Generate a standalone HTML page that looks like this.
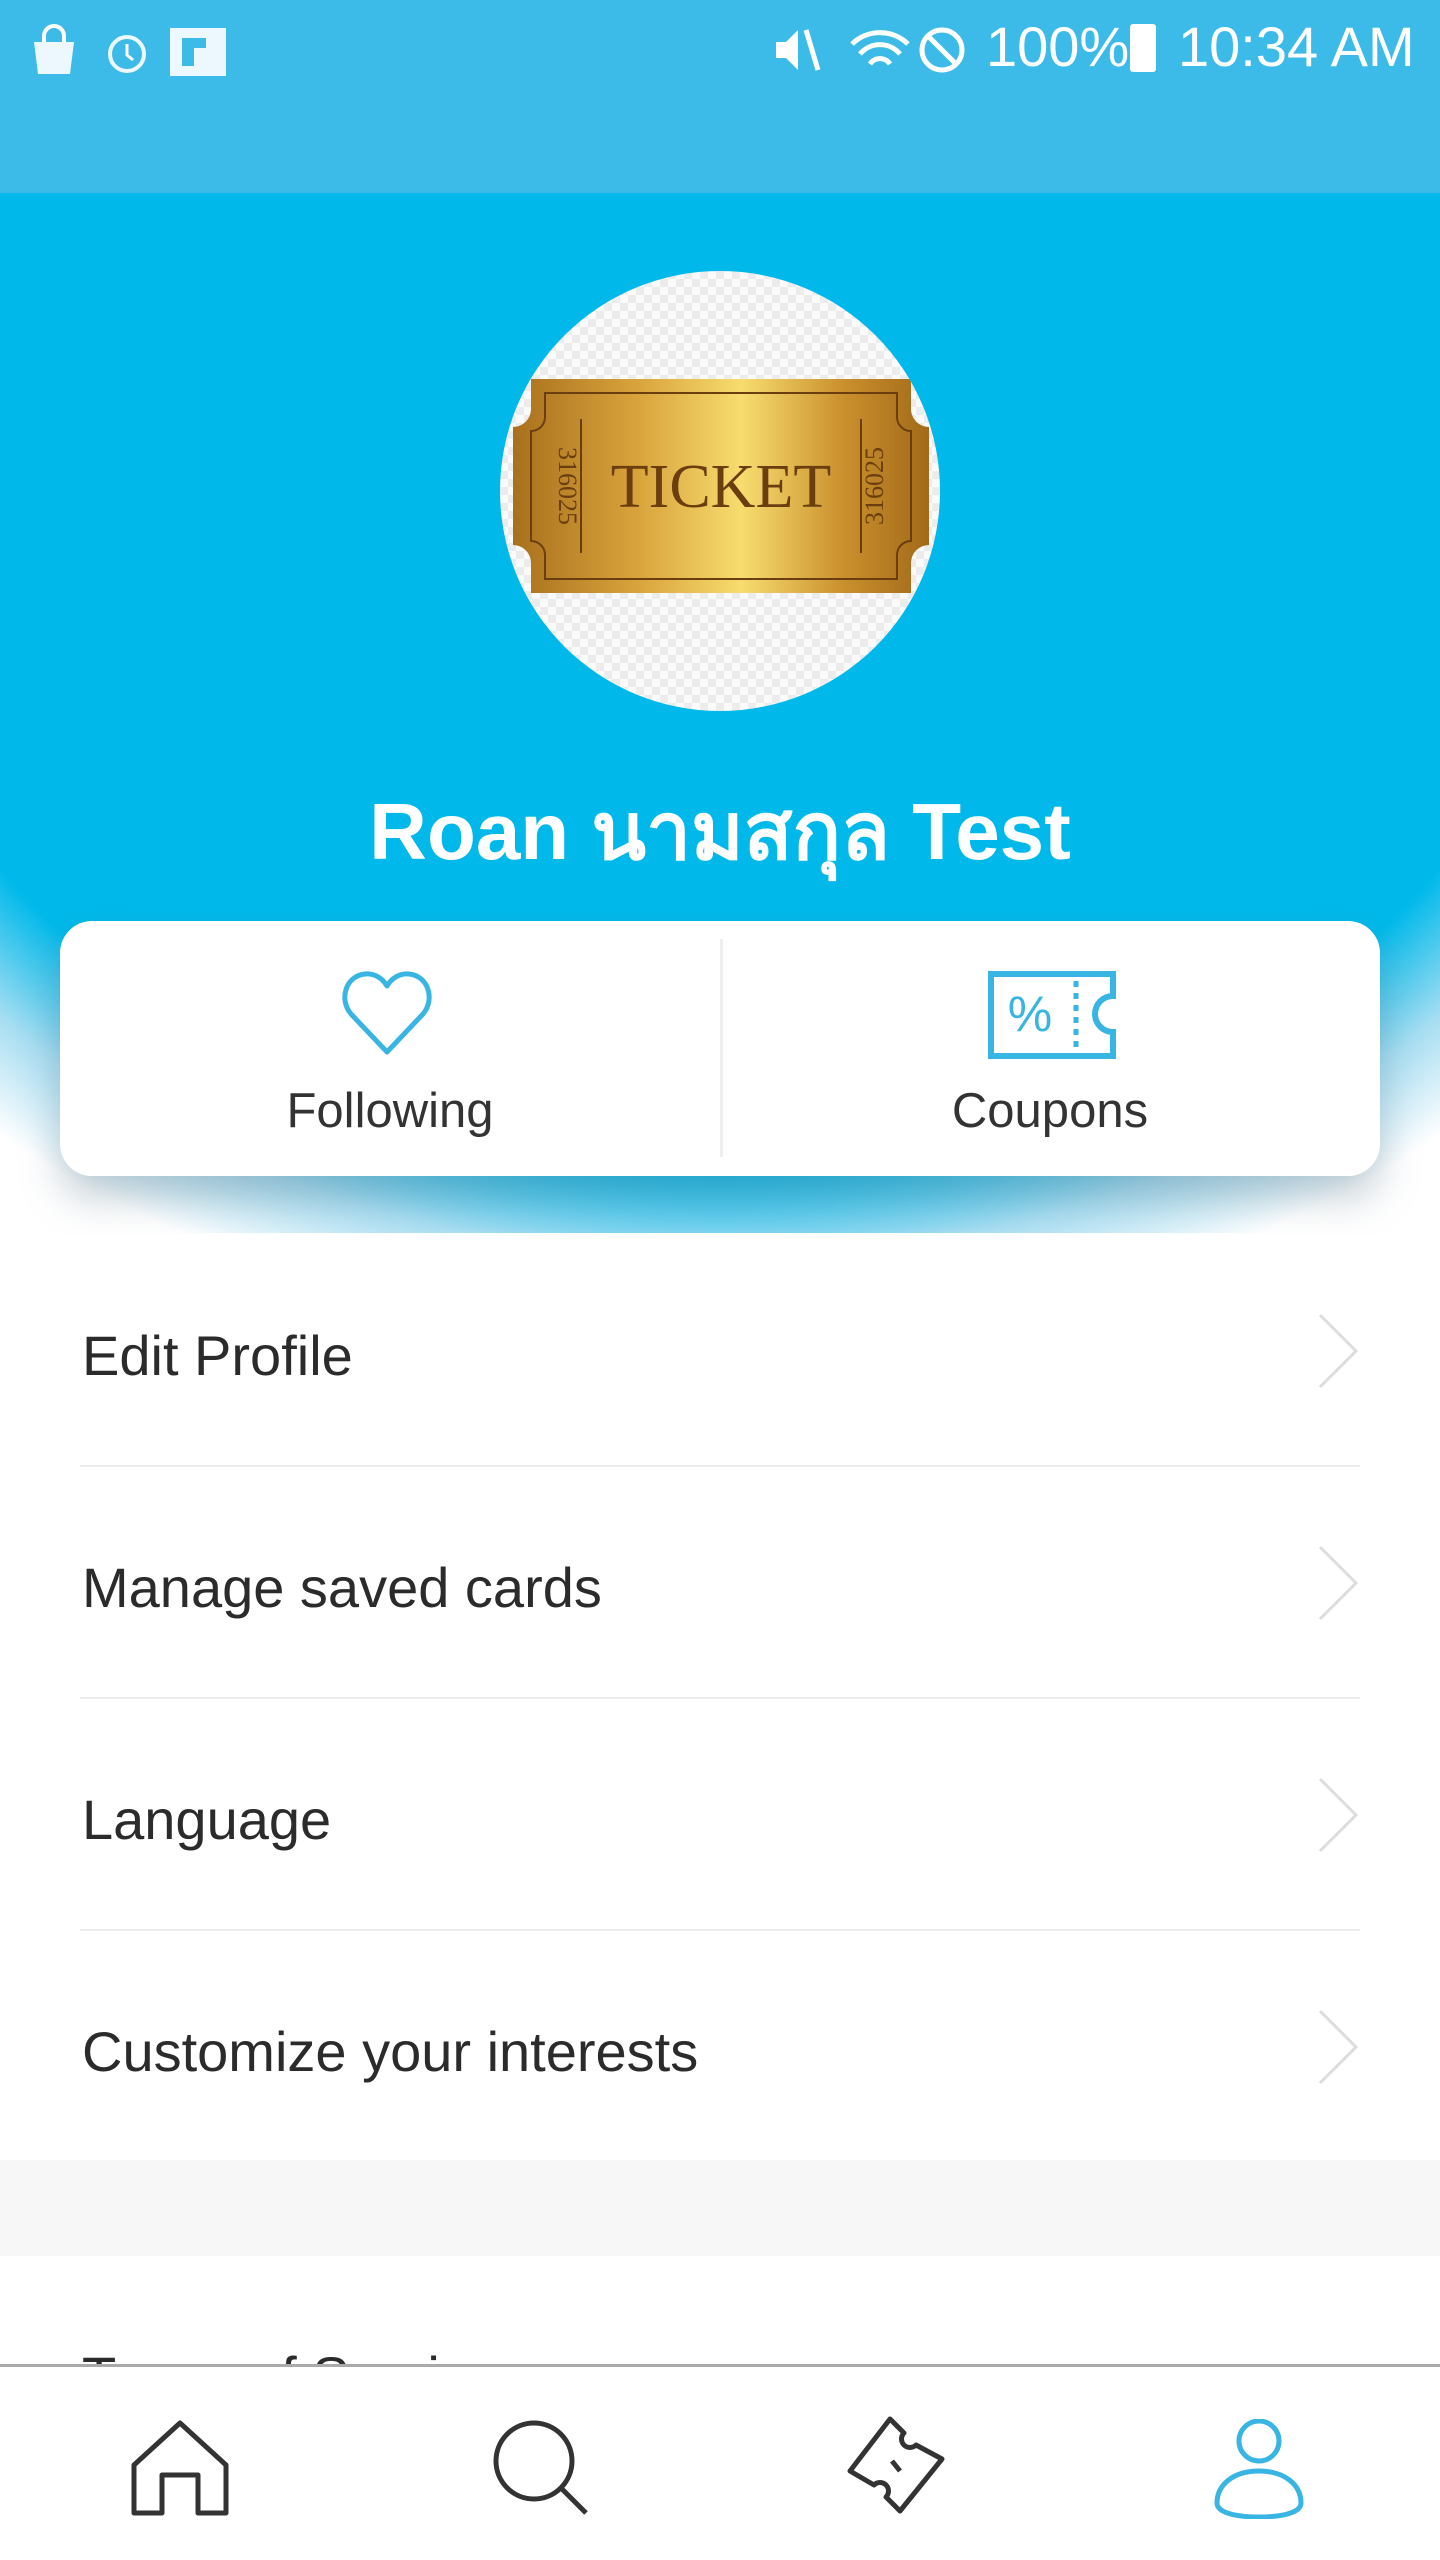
<!DOCTYPE html>
<html><head><meta charset="utf-8"><style>
*{margin:0;padding:0;box-sizing:border-box}
body{width:1440px;height:2560px;overflow:hidden;background:#fff;font-family:"Liberation Sans","Noto Sans CJK SC",sans-serif;position:relative}
.status{position:absolute;left:0;top:0;width:1440px;height:193px;background:#3dbbe8}
.hero{position:absolute;left:0;top:193px;width:1440px;height:1040px;background:radial-gradient(ellipse 1100px 850px at 720px 300px,#00b9ea 79%,#a8def2 90%,#ffffff 100%)}
.avatar{position:absolute;left:500px;top:271px;width:440px;height:440px;border-radius:50%;background:#f4f4f4;background-image:repeating-conic-gradient(#ececec 0 25%,#fafafa 0 50%);background-size:16px 16px;overflow:hidden}
.name{position:absolute;left:0;width:1440px;top:768px;text-align:center;color:#fff;font-weight:bold;font-size:80px;font-family:"Liberation Sans","Noto Sans CJK SC","WenQuanYi Zen Hei",sans-serif}
.card{position:absolute;left:60px;top:921px;width:1320px;height:255px;background:#fff;border-radius:32px;box-shadow:0 22px 40px rgba(90,120,140,.35)}
.div{position:absolute;left:660px;top:18px;width:3px;height:218px;background:#eee}
.lbl{position:absolute;top:162px;font-size:49px;color:#333;text-align:center;width:660px}
.row{position:absolute;left:0;width:1440px;height:232px}
.row span{position:absolute;left:82px;top:88px;font-size:56px;color:#2b2b2b}
.row svg{position:absolute;left:1316px;top:76px}
.row .ln{position:absolute;left:80px;right:80px;bottom:0;height:2px;background:#ececec}
.nav{position:absolute;left:0;top:2364px;width:1440px;height:196px;background:#fff;border-top:3px solid #aaa}
.st{position:absolute;top:14px;color:#fff;font-size:56px}
</style></head><body>
<div class="status">
 <svg style="position:absolute;left:30px;top:24px" width="200" height="54" viewBox="0 0 200 54">
  <path d="M4 18h40l-4 32H8z" fill="#fff" opacity=".9"/><path d="M14 18v-6a10 10 0 0 1 20 0v6" stroke="#fff" stroke-width="4" fill="none"/>
  <circle cx="97" cy="30" r="17" stroke="#fff" stroke-width="4" fill="none" opacity=".9"/><path d="M97 20v11l6 5" stroke="#fff" stroke-width="3" fill="none"/>
  <rect x="140" y="4" width="56" height="48" fill="#fff" opacity=".9"/><path d="M152 14h24v10h-12v18h-12z" fill="#3dbbe8"/>
 </svg>
 <svg style="position:absolute;left:772px;top:22px" width="220" height="56" viewBox="0 0 220 56">
  <path d="M4 20h10l12-12v40L14 36H4z" fill="#fff"/><path d="M34 8l12 40" stroke="#fff" stroke-width="5"/>
  <path d="M80 22a40 40 0 0 1 56 0M88 32a26 26 0 0 1 40 0M98 42a12 12 0 0 1 20 0" stroke="#fff" stroke-width="5" fill="none"/>
  <circle cx="170" cy="28" r="20" stroke="#fff" stroke-width="5" fill="none"/><path d="M156 14l28 28" stroke="#fff" stroke-width="5"/>
 </svg>
 <div class="st" style="left:986px">100%</div>
 <div style="position:absolute;left:1130px;top:24px;width:26px;height:48px;background:#fff;border-radius:3px"></div>
 <div class="st" style="left:1178px">10:34 AM</div>
</div>
<div class="hero"></div>
<div class="avatar">
 <svg style="position:absolute;left:11px;top:108px" width="420" height="214" viewBox="0 0 420 214">
  <defs><linearGradient id="g" x1="0" x2="1"><stop offset="0" stop-color="#a8701d"/><stop offset=".3" stop-color="#d9a33c"/><stop offset=".55" stop-color="#f7dc6e"/><stop offset=".8" stop-color="#c98e2c"/><stop offset="1" stop-color="#a26a1a"/></linearGradient></defs>
  <path d="M20 0h380v30a18 18 0 0 0 18 18v118a18 18 0 0 0-18 18v30H20v-30a18 18 0 0 0-18-18V48a18 18 0 0 0 18-18z" fill="url(#g)"/>
  <path d="M34 14h352v24a14 14 0 0 0 14 14v110a14 14 0 0 0-14 14v24H34v-24a14 14 0 0 0-14-14V52a14 14 0 0 0 14-14z" fill="none" stroke="#6b3e10" stroke-width="2"/>
  <path d="M70 40v134M350 40v134" stroke="#6b3e10" stroke-width="2"/>
  <text x="210" y="128" text-anchor="middle" font-family="Liberation Serif,serif" font-size="62" fill="#6b3e10">TICKET</text>
  <text transform="translate(48 107) rotate(90)" text-anchor="middle" font-family="Liberation Serif,serif" font-size="26" fill="#6b3e10">316025</text>
  <text transform="translate(372 107) rotate(-90)" text-anchor="middle" font-family="Liberation Serif,serif" font-size="26" fill="#6b3e10">316025</text>
 </svg>
</div>
<div class="name">Roan นามสกุล Test</div>
<div class="card">
 <svg style="position:absolute;left:281px;top:47px" width="92" height="92" viewBox="0 0 92 92"><path d="M46 84L10 46C-2 32 4 8 24 6c10-1 18 5 22 12 4-7 12-13 22-12 20 2 26 26 14 40z" fill="none" stroke="#38b5e3" stroke-width="5" stroke-linejoin="round"/></svg>
 <div class="lbl" style="left:0">Following</div>
 <div class="div"></div>
 <svg style="position:absolute;left:928px;top:50px" width="128" height="88" viewBox="0 0 128 88"><path d="M3 3h122v22a18 18 0 0 0 0 36v24H3z" fill="none" stroke="#38b5e3" stroke-width="6"/><path d="M88 10v68" stroke="#38b5e3" stroke-width="5" stroke-dasharray="6 6"/><text x="42" y="60" text-anchor="middle" font-size="50" fill="#38b5e3" font-family="Liberation Sans">%</text></svg>
 <div class="lbl" style="left:660px">Coupons</div>
</div>
<div class="row" style="top:1235px;background:#fff"><span>Edit Profile</span><svg width="44" height="80" viewBox="0 0 44 80"><path d="M4 4l36 36-36 36" fill="none" stroke="#ddd" stroke-width="3"/></svg><div class="ln"></div></div>
<div class="row" style="top:1467px"><span>Manage saved cards</span><svg width="44" height="80" viewBox="0 0 44 80"><path d="M4 4l36 36-36 36" fill="none" stroke="#ddd" stroke-width="3"/></svg><div class="ln"></div></div>
<div class="row" style="top:1699px"><span>Language</span><svg width="44" height="80" viewBox="0 0 44 80"><path d="M4 4l36 36-36 36" fill="none" stroke="#ddd" stroke-width="3"/></svg><div class="ln"></div></div>
<div class="row" style="top:1931px"><span>Customize your interests</span><svg width="44" height="80" viewBox="0 0 44 80"><path d="M4 4l36 36-36 36" fill="none" stroke="#ddd" stroke-width="3"/></svg></div>
<div style="position:absolute;left:0;top:2160px;width:1440px;height:96px;background:#f7f7f7"></div>
<div class="row" style="top:2256px;overflow:hidden;height:110px"><span style="top:88px">Terms of Service</span></div>
<div class="nav">
 <svg style="position:absolute;left:130px;top:52px" width="100" height="100" viewBox="0 0 100 100"><path d="M4 94V46L50 4l46 42v48H68V56H32v38z" fill="none" stroke="#333" stroke-width="5" stroke-linejoin="round"/></svg>
 <svg style="position:absolute;left:492px;top:52px" width="100" height="100" viewBox="0 0 100 100"><circle cx="42" cy="42" r="38" fill="none" stroke="#333" stroke-width="5"/><path d="M70 70l24 24" stroke="#333" stroke-width="5"/></svg>
 <svg style="position:absolute;left:846px;top:48px" width="100" height="100" viewBox="0 0 100 100"><path d="M44 4l14 14a8 8 0 0 0 12 12l26 14-42 52-14-14a8 8 0 0 0-12-12L4 56z" fill="none" stroke="#333" stroke-width="5" stroke-linejoin="round"/><path d="M46 46l8 10" stroke="#333" stroke-width="5"/></svg>
 <svg style="position:absolute;left:1212px;top:52px" width="94" height="100" viewBox="0 0 94 100"><ellipse cx="47" cy="22" rx="20" ry="20" fill="none" stroke="#38b5e3" stroke-width="5"/><path d="M47 52c-26 0-42 14-42 32 0 10 20 14 42 14s42-4 42-14c0-18-16-32-42-32z" fill="none" stroke="#38b5e3" stroke-width="5"/></svg>
</div>
</body></html>
